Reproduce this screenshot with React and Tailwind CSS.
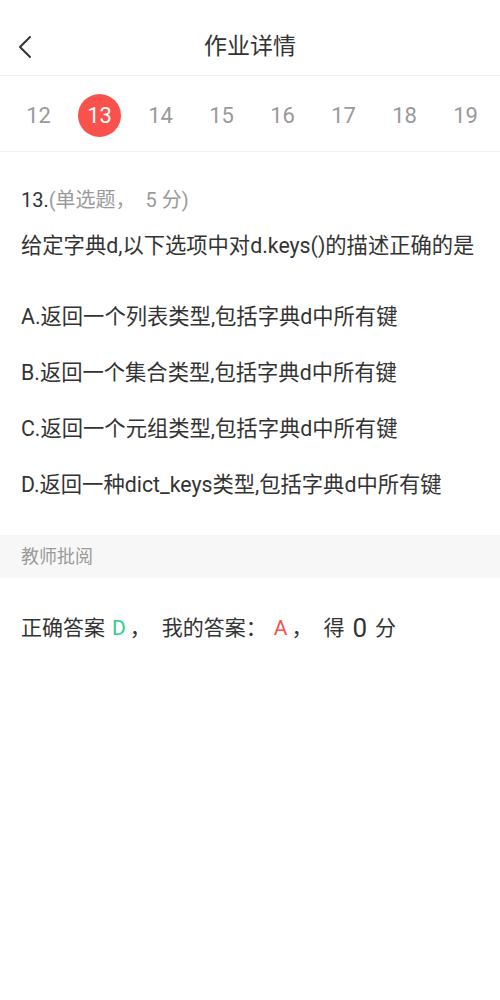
const tabs = [12, 13, 14, 15, 16, 17, 18, 19];

const options = [
  'A.返回一个列表类型,包括字典d中所有键',
  'B.返回一个集合类型,包括字典d中所有键',
  'C.返回一个元组类型,包括字典d中所有键',
  'D.返回一种dict_keys类型,包括字典d中所有键',
];

const font = { fontFamily: 'Roboto, "Noto Sans CJK SC", sans-serif' };

export default function App() {
  return (
    <div className="w-[500px] min-h-[1000px] bg-white text-[#333333]" style={font}>
      {/* header */}
      <div className="grid h-[76px] grid-cols-[60px_1fr_60px] items-center border-b border-[#f0f0f0] pt-[18px]">
        <div className="flex pl-[17px]">
          <svg width="16" height="24" viewBox="0 0 16 24" fill="none">
            <path d="M13 2L3 12l10 10" stroke="#333" strokeWidth="2" strokeLinecap="round" strokeLinejoin="round" />
          </svg>
        </div>
        <h1 className="text-center text-[23px] leading-none text-[#333333]">作业详情</h1>
        <div />
      </div>

      {/* question number tabs */}
      <div className="flex h-[76px] items-center border-b border-[#f0f0f0] pl-[8px] pt-[3px]">
        {tabs.map((n) => (
          <div key={n} className="flex w-[61px] justify-center">
            {n === 13 ? (
              <span className="flex h-[43px] w-[43px] items-center justify-center rounded-full bg-[#f9524d] text-[22px] text-white">
                {n}
              </span>
            ) : (
              <span className="text-[22px] text-[#9a9a9a]">{n}</span>
            )}
          </div>
        ))}
      </div>

      {/* question */}
      <div className="px-[21px] pt-[34px]">
        <p className="text-[20px] leading-[28px]">
          13.<span className="text-[#9a9a9a]">(单选题，&nbsp; 5 分)</span>
        </p>
        <p className="mt-[18px] text-[21.3px] leading-[28px]">给定字典d,以下选项中对d.keys()的描述正确的是</p>
        <div className="mt-[43px] flex flex-col gap-[28px]">
          {options.map((o) => (
            <p key={o} className="text-[21.3px] leading-[28px]">{o}</p>
          ))}
        </div>
      </div>

      {/* teacher review */}
      <div className="mt-[36px] flex h-[43px] items-center bg-[#f7f7f7] px-[21px] text-[18px] text-[#9a9a9a]">
        教师批阅
      </div>

      <div className="mt-[36px] flex items-center px-[21px] text-[21px] leading-[28px]">
        <span>正确答案</span>
        <span className="ml-[7px] text-[#2fcf8f]">D</span>
        <span className="ml-[4px]">，</span>
        <span className="ml-[11px]">我的答案：</span>
        <span className="ml-[7px] text-[#f9524d]">A</span>
        <span className="ml-[4px]">，</span>
        <span className="ml-[11px]">得</span>
        <span className="ml-[8px] text-[26px]">0</span>
        <span className="ml-[8px]">分</span>
      </div>
    </div>
  );
}
